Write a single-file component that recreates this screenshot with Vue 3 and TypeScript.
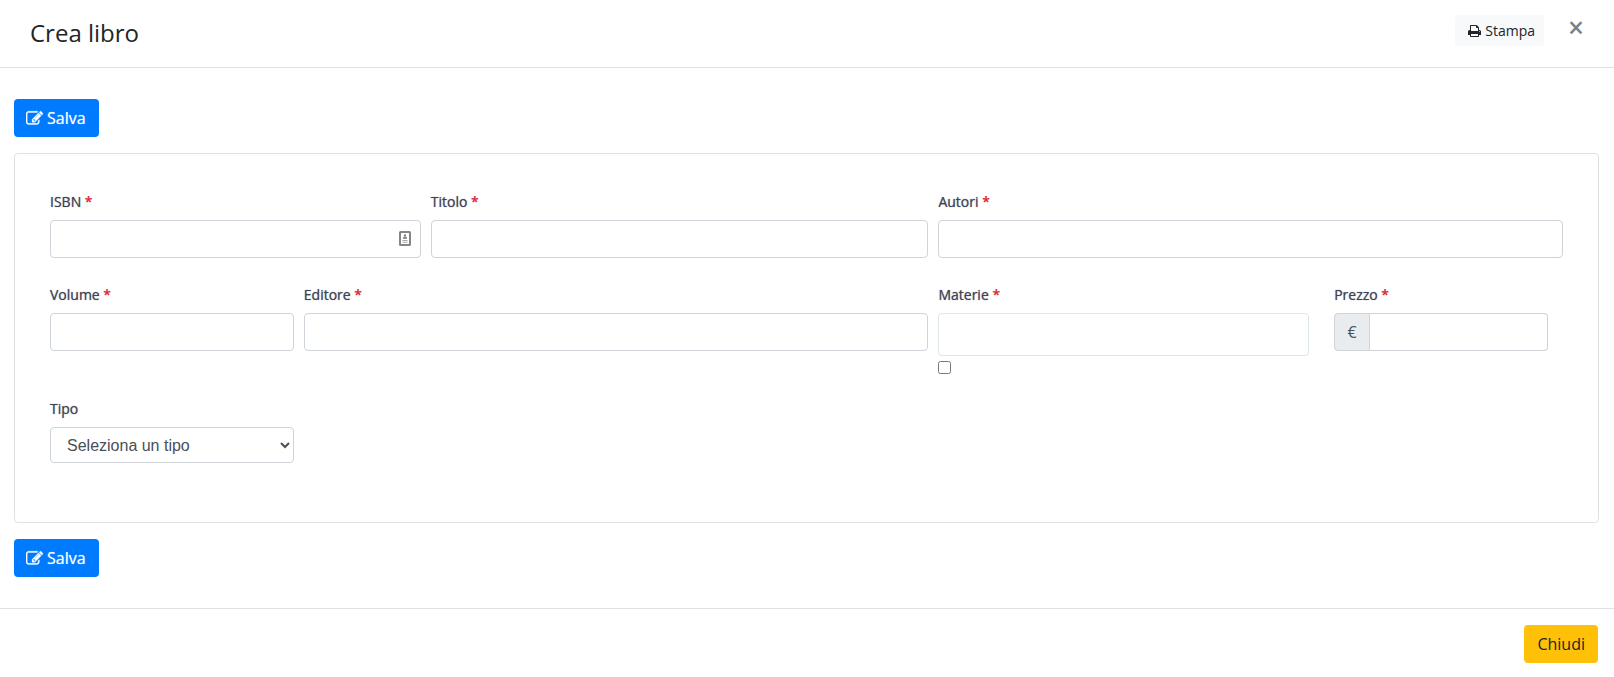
<script setup lang="ts">
import { reactive, ref } from 'vue'

interface Book {
  isbn: string
  title: string
  authors: string
  volume: string
  publisher: string
  subjects: string
  allSubjects: boolean
  price: string
  kind: string
}

interface Field {
  key: 'isbn' | 'title' | 'authors' | 'volume' | 'publisher'
  label: string
  size: string
}

const fields: Field[] = [
  { key: 'isbn', label: 'ISBN', size: 'span-3' },
  { key: 'title', label: 'Titolo', size: 'span-4' },
  { key: 'authors', label: 'Autori', size: 'span-5' },
  { key: 'volume', label: 'Volume', size: 'span-2' },
  { key: 'publisher', label: 'Editore', size: 'span-5' },
]

const book = reactive<Book>({
  isbn: '',
  title: '',
  authors: '',
  volume: '',
  publisher: '',
  subjects: '',
  allSubjects: false,
  price: '',
  kind: '',
})

const saved = ref(false)

const editIcon =
  'M888 1184l116-116-152-152-116 116v56h96v96h56zm440-720q-16-16-33 1l-350 350q-17 17-1 33t33-1l350-350q17-17 1-33zm80 594v190q0 119-84.5 203.5t-203.5 84.5h-832q-119 0-203.5-84.5t-84.5-203.5v-832q0-119 84.5-203.5t203.5-84.5h832q63 0 117 25 15 7 18 23 3 17-9 29l-49 49q-14 14-32 8-23-6-45-6h-832q-66 0-113 47t-47 113v832q0 66 47 113t113 47h832q66 0 113-47t47-113v-126q0-13 9-22l64-64q15-15 35-7t20 29zm-96-738l288 288-672 672h-288v-288zm444 132l-92 92-288-288 92-92q28-28 68-28t68 28l152 152q28 28 28 68t-28 68z'
const printIcon =
  'M448 1536h896v-256h-896v256zm0-640h896v-384h-160q-40 0-68-28t-28-68v-160h-640v640zm1152 64q0-26-19-45t-45-19-45 19-19 45 19 45 45 19 45-19 19-45zm128 0v416q0 13-9.5 22.5t-22.5 9.5h-224v160q0 40-28 68t-68 28h-960q-40 0-68-28t-28-68v-160h-224q-13 0-22.5-9.5t-9.5-22.5v-416q0-79 56.5-135.5t135.5-56.5h64v-544q0-40 28-68t68-28h672q40 0 88 20t76 48l152 152q28 28 48 76t20 88v256h64q79 0 135.5 56.5t56.5 135.5z'

function save(): void {
  saved.value = true
}
</script>

<template>
  <div class="modal">
    <header class="modal-header">
      <h1 class="title">Crea libro</h1>
      <div class="header-actions">
        <button type="button" class="btn btn-light">
          <svg class="icon" viewBox="64 0 1664 1792" aria-hidden="true"><path :d="printIcon" /></svg>
          <span>Stampa</span>
        </button>
        <button type="button" class="close" aria-label="Chiudi finestra">×</button>
      </div>
    </header>

    <form class="modal-body" @submit.prevent="save">
      <button type="submit" class="btn btn-primary">
        <svg class="icon" viewBox="0 0 1792 1792" aria-hidden="true"><path :d="editIcon" /></svg>
        <span>Salva</span>
      </button>

      <section class="card">
        <div v-for="field in fields" :key="field.key" class="field" :class="field.size">
          <label :for="field.key">{{ field.label }} <span class="required">*</span></label>
          <div class="control-wrap">
            <input :id="field.key" v-model="book[field.key]" type="text" class="control" />
            <svg v-if="field.key === 'isbn'" class="autofill" viewBox="0 0 12 15" aria-hidden="true">
              <rect x="1" y="1" width="10" height="13" rx="0.5" fill="#fff" stroke="#858585" stroke-width="2" />
              <circle cx="6" cy="4.4" r="1.1" fill="#777" />
              <path d="M4 7.8q0-2.2 2-2.2t2 2.2z" fill="#777" />
              <path d="M3.5 9.5h5M3.5 11.2h5" stroke="#aaa" stroke-width="1" />
            </svg>
          </div>
        </div>

        <div class="field span-3">
          <label for="subjects">Materie <span class="required">*</span></label>
          <input id="subjects" v-model="book.subjects" type="text" class="control control-tags" />
          <input v-model="book.allSubjects" type="checkbox" class="check" aria-label="Tutte le materie" />
        </div>

        <div class="field span-2 inset">
          <label for="price">Prezzo <span class="required">*</span></label>
          <div class="input-group">
            <span class="addon">€</span>
            <input id="price" v-model="book.price" type="text" class="control" />
          </div>
        </div>

        <div class="field span-2">
          <label for="kind">Tipo</label>
          <select id="kind" v-model="book.kind" class="control select">
            <option value="">Seleziona un tipo</option>
          </select>
        </div>
      </section>

      <button type="submit" class="btn btn-primary">
        <svg class="icon" viewBox="0 0 1792 1792" aria-hidden="true"><path :d="editIcon" /></svg>
        <span>Salva</span>
      </button>
    </form>

    <footer class="modal-footer">
      <button type="button" class="btn btn-warning">Chiudi</button>
    </footer>
  </div>
</template>

<style>
body {
  margin: 0;
  background: #fff;
}
</style>

<style scoped>
.modal,
.modal * {
  box-sizing: border-box;
}

.modal {
  font-family: 'Open Sans', sans-serif;
  font-size: 16px;
  line-height: 24px;
  color: #212529;
}

.modal-header {
  display: flex;
  justify-content: space-between;
  align-items: flex-start;
  min-height: 68px;
  padding: 15px 15px 15px 30px;
  border-bottom: 1px solid #dee2e6;
}

.title {
  margin: 0;
  font-size: 24px;
  line-height: 36px;
  font-weight: 400;
}

.header-actions {
  display: flex;
  align-items: flex-start;
  gap: 9px;
}

.btn {
  display: inline-flex;
  align-items: center;
  gap: 4px;
  padding: 6px 12px;
  border: 1px solid transparent;
  border-radius: 4px;
  font-family: inherit;
  font-size: 16px;
  line-height: 24px;
  font-weight: 400;
  cursor: pointer;
}

.icon {
  width: 17px;
  height: 17px;
  fill: currentColor;
}

.btn-primary {
  padding: 6px 12px 6px 11px;
  background: #007bff;
  color: #fff;
  text-shadow: 0 0 1px rgba(255, 255, 255, 0.6);
}

.btn-primary .icon {
  stroke: currentColor;
  stroke-width: 40px;
}

.btn-light {
  padding: 4px 8px 4px 12px;
  border-radius: 3px;
  background: #f8f9fa;
  color: #212529;
  font-size: 14px;
  line-height: 21px;
}

.btn-light .icon {
  width: 13px;
  height: 14px;
}

.btn-warning {
  background: #ffc107;
  color: #212529;
}

.close {
  padding: 0 15px;
  border: 0;
  background: none;
  color: #808080;
  font-family: inherit;
  font-size: 28px;
  line-height: 24px;
  font-weight: 600;
  cursor: pointer;
}

.modal-body {
  padding: 31px 15px 31px 14px;
}

.card {
  display: grid;
  grid-template-columns: repeat(12, minmax(0, 1fr));
  column-gap: 10px;
  row-gap: 19px;
  margin: 16px 0;
  padding: 30px 35px 59px;
  border: 1px solid #dee2e6;
  border-radius: 4px;
}

.span-2 {
  grid-column: span 2;
}

.span-3 {
  grid-column: span 3;
}

.span-4 {
  grid-column: span 4;
}

.span-5 {
  grid-column: span 5;
}

.inset {
  padding: 0 15px;
}

.field {
  display: flex;
  flex-direction: column;
}

label {
  font-size: 14px;
  line-height: 36px;
  font-weight: 400;
  color: #3f4254;
  text-shadow: 0 0 1px rgba(63, 66, 84, 0.7);
}

.required {
  color: #e02d40;
  font-weight: 700;
  text-shadow: none;
}

.control-wrap {
  position: relative;
  display: flex;
}

.autofill {
  position: absolute;
  top: 11px;
  right: 10px;
  width: 12px;
  height: 15px;
}

.control {
  width: 100%;
  min-width: 0;
  height: 38px;
  padding: 6px 12px;
  border: 1px solid #ced4da;
  border-radius: 4px;
  background: #fff;
  color: #495057;
  font-family: inherit;
  font-size: 16px;
}

.control-tags {
  height: 43px;
  border-color: #dde6e9;
}

.check {
  width: 13px;
  height: 13px;
  margin: 5px 0 -2px;
}

.input-group {
  display: flex;
}

.addon {
  display: flex;
  align-items: center;
  justify-content: center;
  flex: none;
  min-width: 36px;
  border: 1px solid #ced4da;
  border-radius: 4px 0 0 4px;
  background: #e9ecef;
  color: #495057;
}

.input-group .control {
  border-left: 0;
  border-radius: 0 4px 4px 0;
}

.select {
  height: 36px;
  font-family: 'Liberation Sans', Arial, sans-serif;
}

.modal-footer {
  display: flex;
  justify-content: flex-end;
  padding: 16px;
  border-top: 1px solid #dee2e6;
}
</style>
